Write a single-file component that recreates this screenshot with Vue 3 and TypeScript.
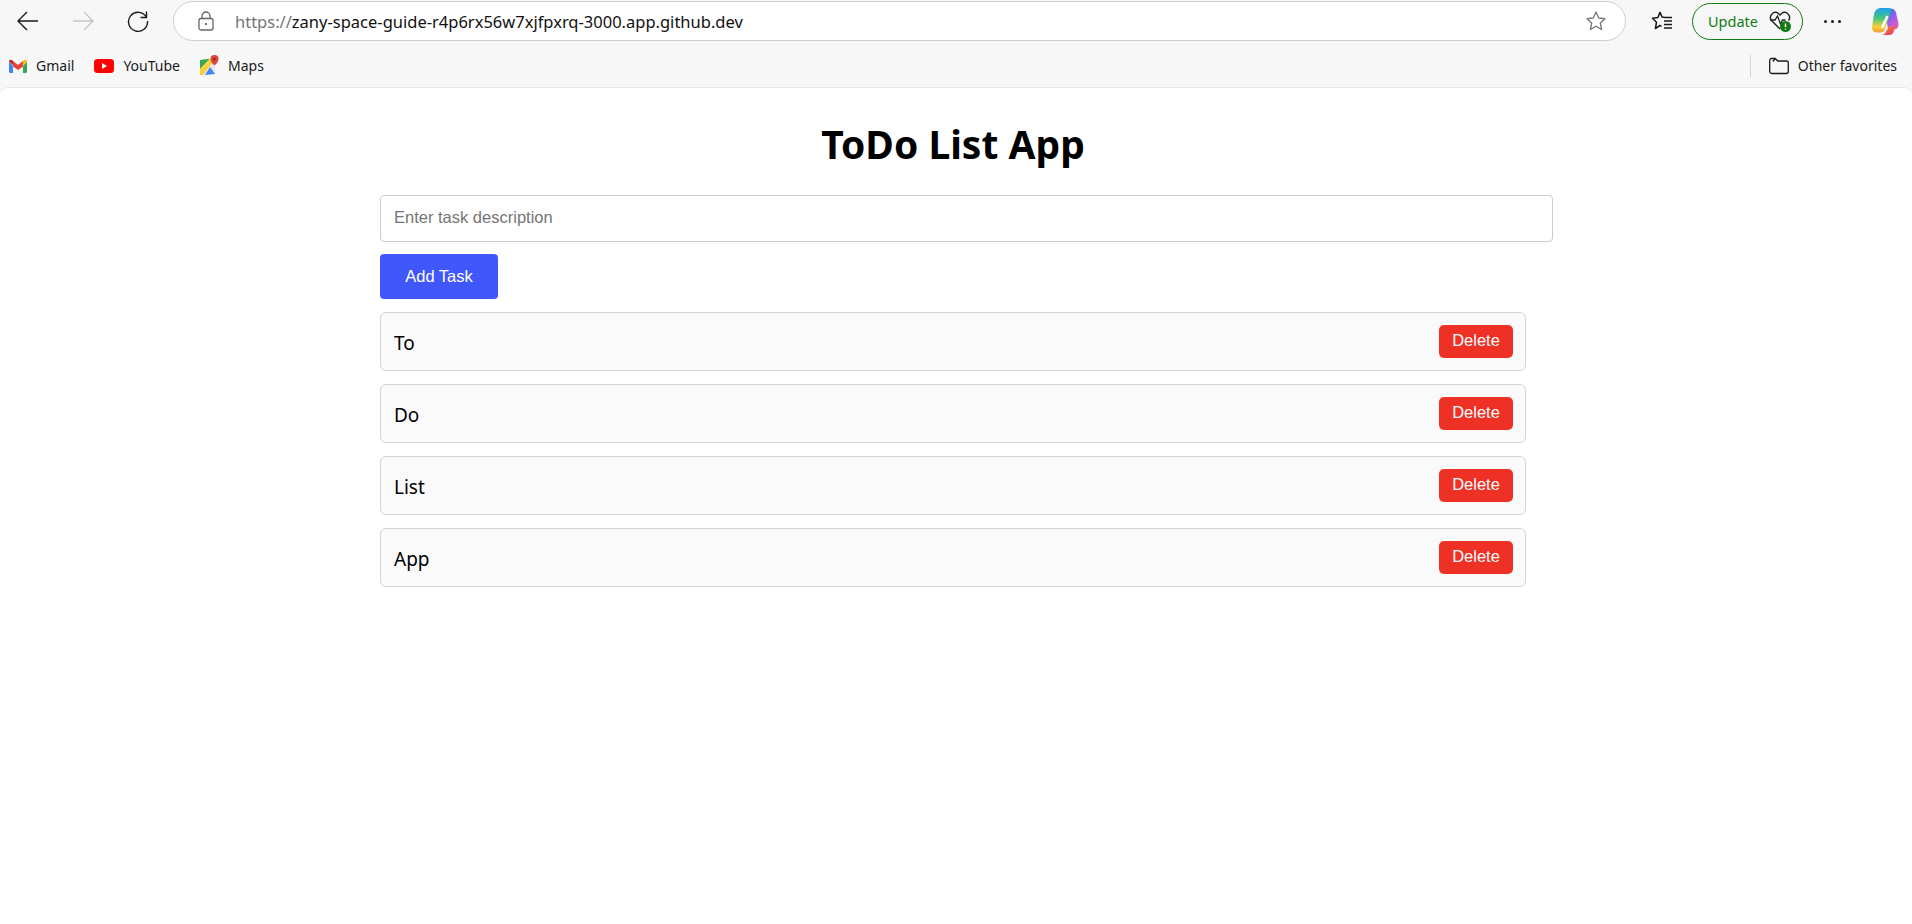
<script setup lang="ts">
const tasks: string[] = ['To', 'Do', 'List', 'App']
</script>

<template>
  <div class="browser">
    <header class="toolbar">
      <button class="nav back" aria-label="Back">
        <svg width="24" height="24" viewBox="0 0 24 24" fill="none" stroke="#1a1a1a" stroke-width="1.4"><path d="M22 12H2M11 3l-9 9 9 9" /></svg>
      </button>
      <button class="nav fwd" aria-label="Forward">
        <svg width="24" height="24" viewBox="0 0 24 24" fill="none" stroke="#c6c6c6" stroke-width="1.4"><path d="M2 12h20M13 3l9 9-9 9" /></svg>
      </button>
      <button class="nav reload" aria-label="Reload">
        <svg width="24" height="24" viewBox="0 0 24 24" fill="none" stroke="#1a1a1a" stroke-width="1.4"><path d="M20.5 8.5A9.5 9.5 0 1 0 21.5 12M20.5 2.5v6h-6" /></svg>
      </button>
      <div class="address">
        <svg class="lock" width="18" height="20" viewBox="0 0 18 20" fill="none" stroke="#666" stroke-width="1.3"><rect x="2" y="7.5" width="14" height="11.5" rx="2" /><path d="M5 7.5V5a4 4 0 0 1 8 0v2.5" /><circle cx="9" cy="13" r="1" fill="#444" stroke="none" /></svg>
        <span class="url"><span class="scheme">https://</span>zany-space-guide-r4p6rx56w7xjfpxrq-3000.app.github.dev</span>
        <svg class="star" width="22" height="22" viewBox="0 0 22 22" fill="none" stroke="#777" stroke-width="1.3"><path d="M11 2l2.7 6 6.3.7-4.700 4.300 1.300 6.500L11 16.200 5.400 19.500l1.300-6.500L2 8.700 8.300 8z" stroke-linejoin="round" /></svg>
      </div>
      <svg class="favs" width="22" height="22" viewBox="0 0 22 22" fill="none" stroke="#1a1a1a" stroke-width="1.5"><path d="M9 2l2 5 3 .5M9 2L7 7.500 1.500 8.200l4 4-1.100 6.300L9 15.500l1.500.8" stroke-linejoin="round" /><path d="M13 11h8M13 14.500h8M13 18h8M14 7.500h7" /></svg>
      <div class="update">
        <span>Update</span>
        <svg width="24" height="24" viewBox="0 0 24 24" fill="none"><path d="M12 20L3.500 11.500a5 5 0 0 1 7-7L12 6l1.500-1.500a5 5 0 0 1 7 7" stroke="#222" stroke-width="1.400" /><path d="M2 11h5l2.500-4 3 8 2-4h3" stroke="#222" stroke-width="1.300" /><circle cx="17.500" cy="17.500" r="5.500" fill="#107c10" /><path d="M17.500 14.500v3.500M17.500 19.500v1" stroke="#fff" stroke-width="1.500" /></svg>
      </div>
      <div class="more" aria-label="More"><i></i><i></i><i></i></div>
      <svg class="copilot" width="28" height="29" viewBox="0 0 28 29">
        <defs>
          <linearGradient id="cpA" x1="0.4" y1="0" x2="0.4" y2="1"><stop offset="0" stop-color="#1f9fee" /><stop offset=".42" stop-color="#3fc77c" /><stop offset=".75" stop-color="#f5d13c" /><stop offset="1" stop-color="#f79a3a" /></linearGradient>
          <linearGradient id="cpB" x1="0.2" y1="0" x2="0.8" y2="1"><stop offset="0" stop-color="#2c72ee" /><stop offset=".5" stop-color="#9d5cec" /><stop offset="1" stop-color="#e85fb0" /></linearGradient>
          <linearGradient id="cpC" x1="0" y1="0" x2="1" y2="1"><stop offset="0" stop-color="#f9893b" /><stop offset="1" stop-color="#e9365f" /></linearGradient>
        </defs>
        <path d="M14 1.500h5c3 0 5 1.500 6 4l2.500 11c.7 3.500-1.500 6-4.500 6h-6z" fill="url(#cpB)" />
        <path d="M10 1h8c2 0 2.500 1.500 2 3L14 22c-.6 2-2 3.500-4.500 3.500H6c-3.500 0-5.500-3-5-6L3 7.500C3.600 3.500 6.500 1 10 1z" fill="url(#cpA)" />
        <path d="M10.500 28h8c2 0 3.500-1.200 4-3l1.500-6-6 .5-3.500 6c-.8 1.400-2.500 2.500-4 2.500z" fill="url(#cpC)" />
        <path d="M16 10L11.500 20" stroke="#fff" stroke-width="2.600" stroke-linecap="round" />
      </svg>
    </header>

    <nav class="bookmarks">
      <a class="mark">
        <svg width="18" height="14" viewBox="0 0 18 14"><path d="M0 2.500V12.800c0 .7.500 1.200 1.200 1.200H4V7z" fill="#4285f4" /><path d="M14 14h2.800c.7 0 1.200-.5 1.200-1.200V2.500L14 7z" fill="#34a853" /><path d="M4 7.500L9 11l5-3.500V2L9 6 4 2z" fill="#ea4335" /><path d="M0 2.500L4 6V2L2.800 1C1.600.1 0 1 0 2.500z" fill="#c5221f" /><path d="M14 2v4l4-3.500C18 1 16.400.1 15.200 1z" fill="#fbbc04" /></svg>
        <span>Gmail</span>
      </a>
      <a class="mark">
        <svg width="20" height="14" viewBox="0 0 20 14"><rect width="20" height="14" rx="3.500" fill="#f00" /><path d="M8 4l5 3-5 3z" fill="#fff" /></svg>
        <span>YouTube</span>
      </a>
      <a class="mark">
        <svg width="19" height="21" viewBox="0 0 19 21"><path d="M0 5l15-2v16L0 20z" fill="#e8e8e8" /><path d="M0 5l10-1.300L0 14z" fill="#35a853" /><path d="M0 14L10 3.700l3 3L3 20H0z" fill="#fbcf3a" /><path d="M5 20l5-8 5 7z" fill="#4285f4" /><path d="M14.500 0a4 4 0 0 0-4 4c0 3 4 6.500 4 6.500s4-3.500 4-6.500a4 4 0 0 0-4-4z" fill="#db4437" /><circle cx="14.500" cy="4" r="1.300" fill="#8e2a22" /></svg>
        <span>Maps</span>
      </a>
      <div class="spacer"></div>
      <div class="divider"></div>
      <a class="mark other">
        <svg width="20" height="18" viewBox="0 0 20 18" fill="none" stroke="#1a1a1a" stroke-width="1.300"><path d="M.7 3.500A2 2 0 0 1 2.700 1.500h3.500l2.500 2.500h8.600a2 2 0 0 1 2 2v8.500a2 2 0 0 1-2 2H2.700a2 2 0 0 1-2-2z" /><path d="M6.200 1.500L4 4.500" /></svg>
        <span>Other favorites</span>
      </a>
    </nav>

    <main class="page">
      <h1>ToDo List App</h1>
      <div class="container">
        <input class="task-input" type="text" placeholder="Enter task description" />
        <button class="add">Add Task</button>
        <ul class="list">
          <li v-for="t in tasks" :key="t" class="item">
            <span class="label">{{ t }}</span>
            <button class="del">Delete</button>
          </li>
        </ul>
      </div>
    </main>
  </div>
</template>

<style>
html, body { margin: 0; height: 100%; background: #f7f7f7; overflow: hidden; }
</style>

<style scoped>
.browser { height: 924px; display: flex; flex-direction: column; background: #f7f7f7; font-family: "Noto Sans", "Open Sans", sans-serif; color: #1a1a1a; }
.toolbar { height: 42px; display: flex; align-items: center; flex: none; }
.nav { width: 24px; height: 24px; padding: 0; border: 0; background: none; display: block; flex: none; }
.back { margin-left: 16px; }
.fwd { margin-left: 31px; }
.reload { margin-left: 31px; }
.address { width: 1453px; height: 40px; margin-left: 23px; box-sizing: border-box; border: 1px solid #cfcfcf; border-radius: 20px; background: #fff; display: flex; align-items: center; padding-left: 23px; padding-right: 18px; flex: none; }
.url { margin-left: 20px; font-size: 16.5px; color: #111; flex: 1; white-space: nowrap; }
.scheme { color: #767676; }
.favs { margin-left: 25px; flex: none; }
.update { width: 111px; height: 37px; margin-left: 19px; box-sizing: border-box; border: 1.5px solid #107c10; border-radius: 19px; display: flex; align-items: center; justify-content: space-between; padding: 0 10px 0 15px; color: #107c10; font-size: 14.5px; flex: none; }
.more { margin-left: 21px; display: flex; gap: 4px; flex: none; }
.more i { width: 3px; height: 3px; border-radius: 50%; background: #1a1a1a; display: block; }
.copilot { margin-left: 30px; flex: none; }
.bookmarks { height: 45px; box-sizing: border-box; display: flex; align-items: center; flex: none; padding: 2px 9px 0; font-size: 14px; }
.mark { display: flex; align-items: center; gap: 9px; margin-right: 20px; color: #1a1a1a; white-space: nowrap; }
.spacer { flex: 1; }
.divider { width: 1px; height: 22px; background: #d4d4d4; margin-right: 18px; }
.other { margin-right: 6px; }
.page { flex: 1; background: #fff; border-top: 1px solid #e9e9e9; border-radius: 8px 8px 0 0; box-sizing: border-box; }
h1 { margin: 29px 0 0; padding-right: 6px; text-align: center; font-size: 39px; line-height: 54px; font-weight: 700; color: #000; }
.container { width: 1173px; margin: 24px 0 0 380px; }
.task-input { display: block; width: 1173px; height: 47px; box-sizing: border-box; padding: 0 13px 2px; border: 1px solid #ccc; border-radius: 4px; font: 16.5px "Liberation Sans", Arial, sans-serif; outline: none; background: #fff; }
.task-input::placeholder { color: #757575; opacity: 1; }
.add { display: block; width: 118px; height: 45px; margin-top: 12px; border: 0; border-radius: 4px; background: #3f57fb; color: #fff; font: 16.5px "Liberation Sans", Arial, sans-serif; }
.list { list-style: none; margin: 13px 0 0; padding: 0; width: 1146px; display: flex; flex-direction: column; gap: 13px; }
.item { height: 59px; box-sizing: border-box; border: 1px solid #d4d4d4; border-radius: 6px; background: #fafafa; display: flex; align-items: center; justify-content: space-between; padding: 0 12px 0 13px; font-size: 19px; color: #000; }
.label { padding-top: 2px; }
.del { width: 74px; height: 33px; border: 0; border-radius: 5px; background: #ee3124; color: #fff; font: 16.5px "Liberation Sans", Arial, sans-serif; padding: 0 0 2px; }
</style>
